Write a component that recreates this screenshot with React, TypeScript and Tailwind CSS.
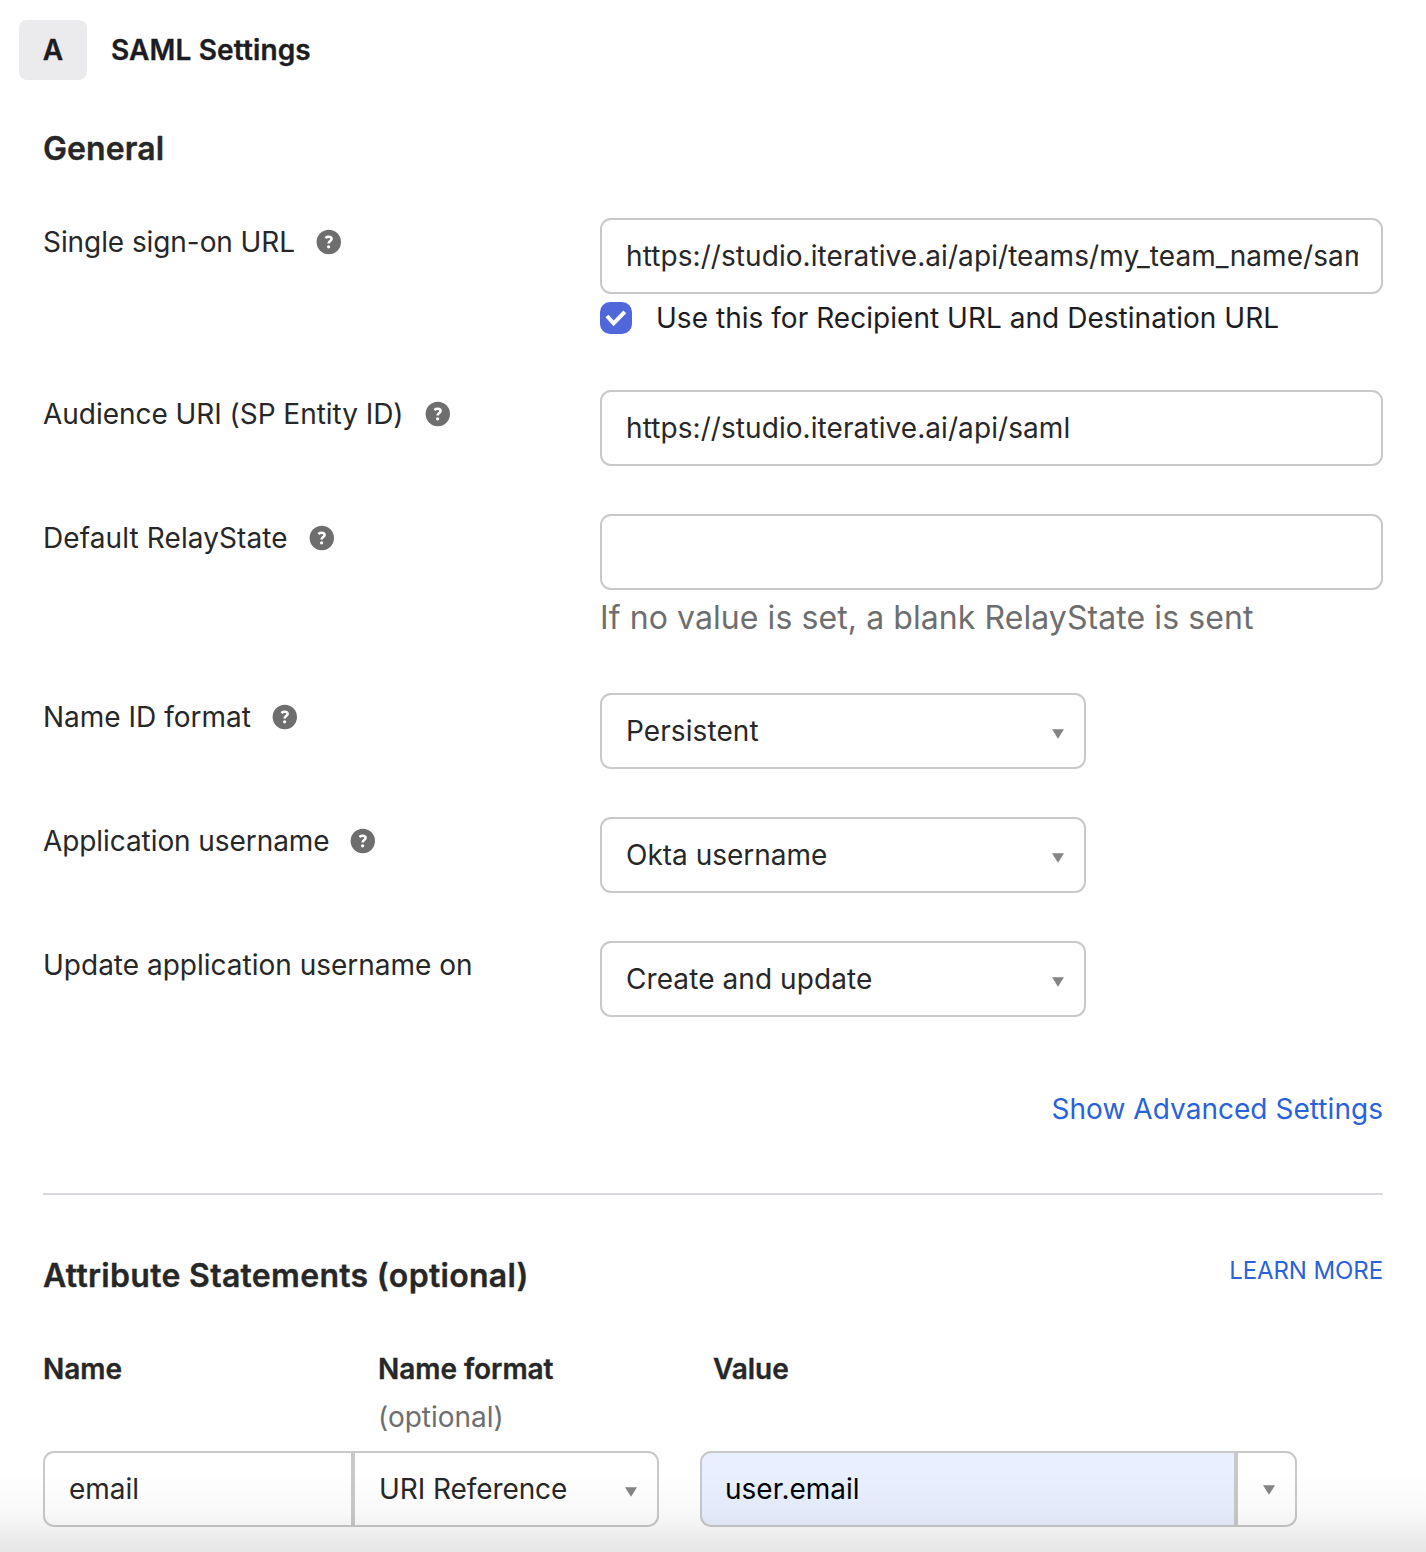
import type { ReactNode } from "react";

function Help() {
  return (
    <svg className="ml-[21px] shrink-0" width="26" height="26" viewBox="0 0 26 26">
      <circle cx="12.8" cy="13" r="12.2" fill="#6e6e6e" />
      <path d="M9.4 9c1-.8 2-1.2 3.3-1.2 1.8 0 2.9.8 2.9 2.2 0 2-3 2-3 4.5" fill="none" stroke="#fff" strokeWidth="2.6" />
      <circle cx="12.6" cy="17.8" r="1.6" fill="#fff" />
    </svg>
  );
}

function Arrow({ className = "mt-[5px]" }: { className?: string }) {
  return (
    <svg width="12" height="10" viewBox="0 0 12 10" className={`shrink-0 ${className}`}>
      <path d="M0 0.3h12L6 9.7z" fill="#858585" />
    </svg>
  );
}

function Row({ label, help = true, height, tracking = "", children }: { label: string; help?: boolean; height: string; tracking?: string; children: ReactNode }) {
  return (
    <div className={`flex items-start ${height}`}>
      <div className="flex h-12 w-[557px] shrink-0 items-center">
        <span className={tracking}>{label}</span>
        {help && <Help />}
      </div>
      <div className="w-[783px]">{children}</div>
    </div>
  );
}

const box = "flex h-[76px] items-center rounded-[11px] border-2 border-[#c9c9c9] px-6";
const heading = "font-semibold [-webkit-text-stroke:0.35px_currentColor]";

function Field({ value = "" }: { value?: string }) {
  return (
    <div className={`${box} pr-[23px]`}>
      <div className="w-full overflow-hidden tracking-[0.075px]">{value}</div>
    </div>
  );
}

function Select({ value, tracking = "tracking-[0.08px]" }: { value: string; tracking?: string }) {
  return (
    <div className={`${box} w-[486px] justify-between pr-5`}>
      <span className={tracking}>{value}</span>
      <Arrow />
    </div>
  );
}

export default function App() {
  return (
    <main className="relative h-[1552px] w-[1426px] overflow-hidden bg-white font-['Inter',sans-serif] text-[28px] leading-[40px] whitespace-nowrap text-[#272727]">
      <header className={`flex h-[80px] items-end pl-[19px] text-[#1d1d21] ${heading}`}>
        <div className="flex h-[60px] w-[68px] items-center justify-center rounded-[8px] bg-[#ebebed]">A</div>
        <h1 className="ml-6 flex h-[60px] items-center tracking-[0.14px]">SAML Settings</h1>
      </header>
      <div className="ml-[43px] w-[1340px]">
        <h2 className={`flex h-[138px] items-start pt-[49px] text-[32px] tracking-[0.1px] ${heading}`}>General</h2>
        <Row label="Single sign-on URL" height="h-[172px]" tracking="tracking-[-0.08px]">
          <Field value="https://studio.iterative.ai/api/teams/my_team_name/saml" />
          <div className="flex h-12 items-center text-[#1d1d21]">
            <svg width="32" height="32" viewBox="0 0 32 32">
              <rect width="32" height="32" rx="10" fill="#5067db" />
              <path d="M7 14l6.6 7.3 11.2-11.5" fill="none" stroke="#fff" strokeWidth="4" />
            </svg>
            <span className="ml-6 tracking-[0.035px]">Use this for Recipient URL and Destination URL</span>
          </div>
        </Row>
        <Row label="Audience URI (SP Entity ID)" height="h-[124px]" tracking="tracking-[-0.04px]">
          <Field value="https://studio.iterative.ai/api/saml" />
        </Row>
        <Row label="Default RelayState" height="h-[179px]" tracking="tracking-[0.1px]">
          <Field />
          <p className="pt-2 text-[32px] tracking-[0.08px] text-[#6e6e6e]">If no value is set, a blank RelayState is sent</p>
        </Row>
        <Row label="Name ID format" height="h-[124px]"><Select value="Persistent" /></Row>
        <Row label="Application username" height="h-[124px]" tracking="tracking-[-0.08px]"><Select value="Okta username" tracking="tracking-[0px]" /></Row>
        <Row label="Update application username on" help={false} height="h-[124px]"><Select value="Create and update" /></Row>
        <div className="flex h-[130px] items-start justify-end border-b-2 border-[#d7d7dc] pt-6 text-[#2962d9]">
          <a className="tracking-[0.04px]">Show Advanced Settings</a>
        </div>
        <div className="flex h-[154px] items-start justify-between pt-[61px]">
          <h2 className={`text-[32px] tracking-[0.3px] ${heading}`}>Attribute Statements (optional)</h2>
          <a className="-mt-[5px] text-[24px] tracking-[-0.1px] text-[#2962d9]">LEARN MORE</a>
        </div>
        <div className="flex h-[102px] tracking-[-0.05px]">
          <div className={`w-[335px] ${heading}`}>Name</div>
          <div className="w-[335px]">
            <div className={heading}>Name format</div>
            <div className="mt-2 tracking-normal text-[#6e6e6e]">(optional)</div>
          </div>
          <div className={heading}>Value</div>
        </div>
        <div className="flex">
          <div className={`${box} w-[310px] rounded-r-none`}>email</div>
          <div className={`${box} w-[306px] justify-between rounded-l-none pr-5`}><span className="tracking-[-0.08px]">URI Reference</span><Arrow /></div>
          <div className={`${box} ml-[41px] w-[536px] rounded-r-none bg-[#e8effe] text-black`}><span className="-ml-px">user.email</span></div>
          <div className="flex h-[76px] w-[61px] items-center justify-center rounded-r-[11px] border-2 border-[#c9c9c9] pl-[5px]"><Arrow className="mt-px" /></div>
        </div>
      </div>
      <div className="pointer-events-none absolute inset-x-0 bottom-0 h-[80px] bg-linear-to-b from-black/0 via-black/[0.025] to-black/10" />
    </main>
  );
}
